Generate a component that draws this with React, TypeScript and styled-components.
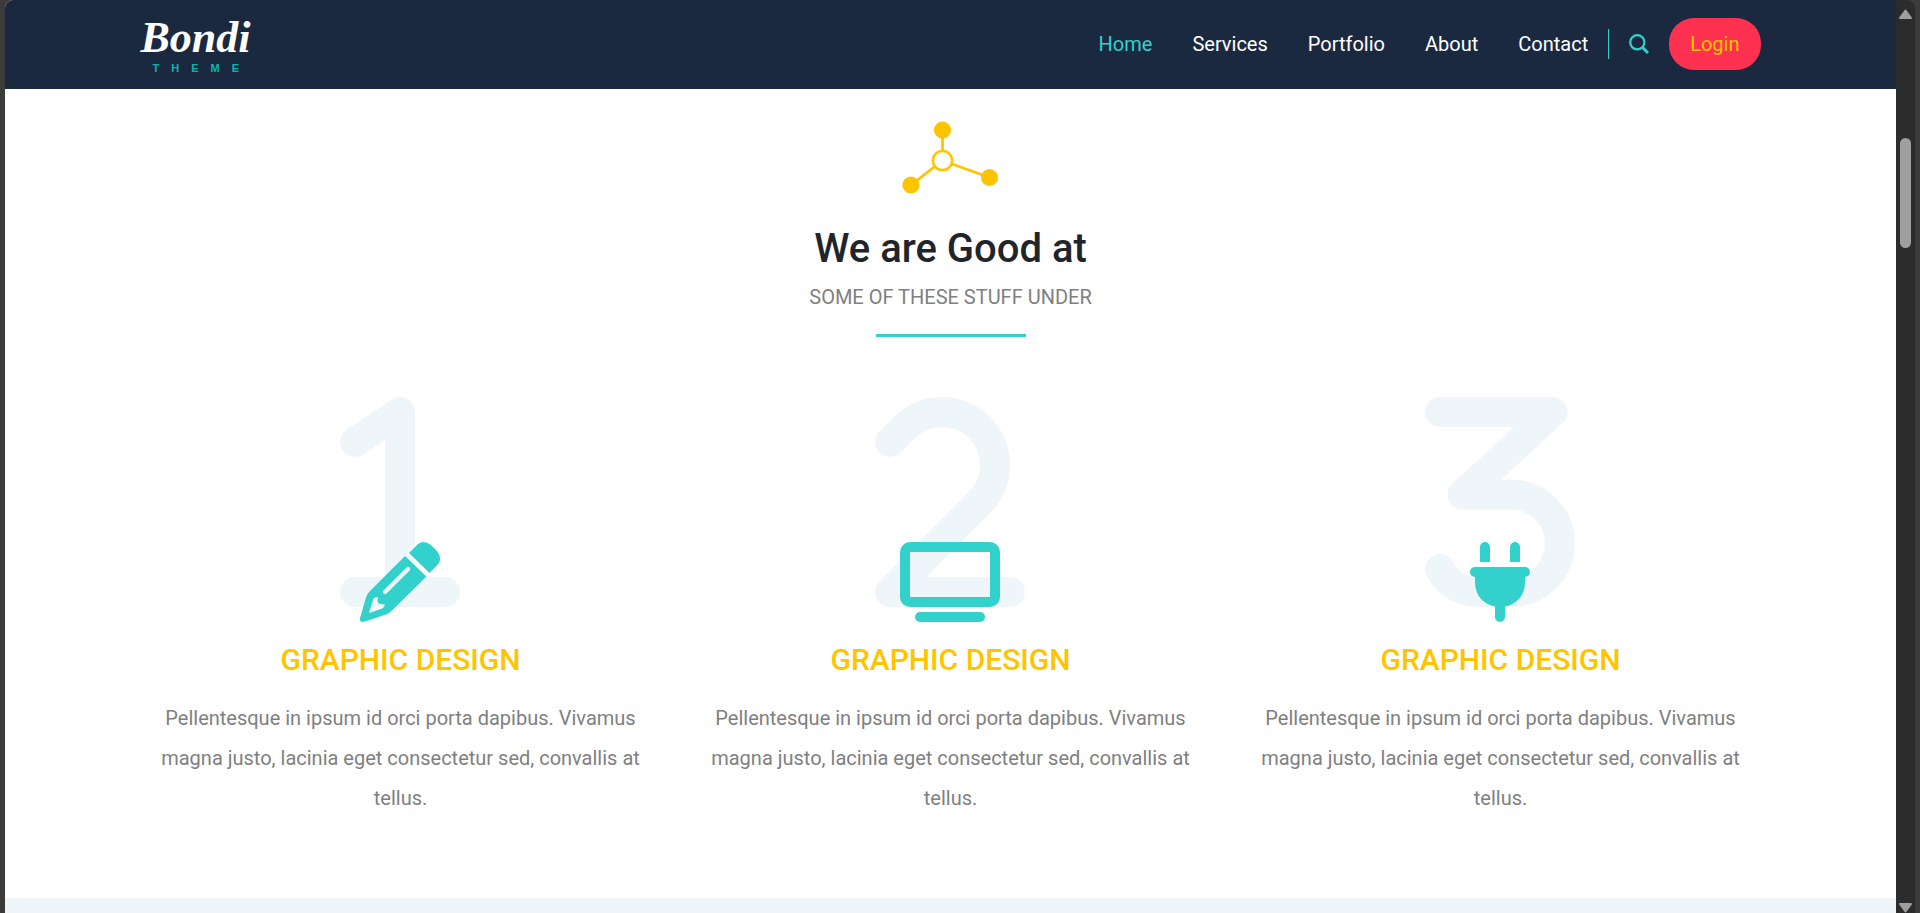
import React from 'react';
import styled, { createGlobalStyle } from 'styled-components';

const navy = '#1b2940';
const teal = '#33d1cc';
const yellow = '#ffc400';
const red = '#ff3150';
const pale = '#eff6fa';
const grey = '#808080';

const GlobalStyle = createGlobalStyle`
  *, *::before, *::after { box-sizing: border-box; }
  body {
    margin: 0;
    background: #3b3b3a;
    font-family: Roboto, 'Liberation Sans', sans-serif;
    font-size: 20px;
    line-height: 30px;
    color: #212529;
  }
  h2, h3, p, ul { margin: 0; padding: 0; }
`;

const Frame = styled.div`
  display: flex;
  height: 100vh;
  padding: 0 5px;
  overflow: hidden;
`;

const Page = styled.div`
  flex: 1;
  min-width: 0;
  display: flex;
  flex-direction: column;
  overflow: hidden;
  background: #fff;
  border-top-left-radius: 8px;
`;

const Header = styled.header`
  flex: none;
  padding-bottom: 1px;
  background: ${navy};
`;

const Container = styled.div`
  width: 100%;
  max-width: 1650px;
  margin: 0 auto;
  padding: 0 15px;
`;

const Bar = styled(Container)`
  display: flex;
  align-items: center;
  justify-content: space-between;
  height: 88px;
`;

const Brand = styled.a`
  display: flex;
  flex-direction: column;
  align-items: flex-start;
  color: #fff;
  text-decoration: none;
`;

const BrandName = styled.span`
  font: italic bold 44px/49px 'Liberation Serif', serif;
`;

const BrandTag = styled.span`
  padding-left: 12px;
  font: bold 11px/13px 'Liberation Sans', sans-serif;
  letter-spacing: 12px;
  color: #08b5b0;
`;

const Nav = styled.nav`
  display: flex;
  align-items: center;
  gap: 20px;
`;

const Menu = styled.ul`
  display: flex;
  gap: 40px;
  list-style: none;
`;

const MenuLink = styled.a<{ $active?: boolean }>`
  color: ${(p) => (p.$active ? teal : '#fff')};
  text-decoration: none;
`;

const Tools = styled.div`
  display: flex;
  align-items: center;
  gap: 20px;
`;

const SearchButton = styled.button`
  display: flex;
  padding: 0 0 0 20px;
  height: 30px;
  align-items: center;
  border: 0;
  border-left: 1px solid ${teal};
  background: none;
  color: ${teal};
`;

const LoginButton = styled.button`
  height: 52px;
  padding: 0 21px;
  border: 0;
  border-radius: 25px;
  background: ${red};
  color: ${yellow};
  font: inherit;
`;

const Section = styled.section`
  flex: none;
  padding: 32px 0 80px;
  text-align: center;
`;

const Emblem = styled.svg`
  display: block;
  margin: 0 auto 30px;
`;

const Title = styled.h2`
  font-size: 40px;
  line-height: 48px;
  font-weight: 500;
`;

const Subtitle = styled.p`
  margin-top: 9px;
  color: ${grey};
  text-transform: uppercase;
`;

const Rule = styled.div`
  width: 150px;
  height: 3px;
  margin: 22px auto 60px;
  background: ${teal};
`;

const Cards = styled.div`
  display: grid;
  grid-template-columns: repeat(3, 1fr);
  gap: 30px;
`;

const Card = styled.article`
  padding: 0 10px;
`;

const CardArt = styled.svg`
  display: block;
  margin: 0 auto 20px;
`;

const CardTitle = styled.h3`
  color: ${yellow};
  font-size: 30px;
  line-height: 36px;
  font-weight: 500;
  text-transform: uppercase;
`;

const CardText = styled.p`
  margin-top: 20px;
  color: ${grey};
  line-height: 40px;
`;

const NextSection = styled.section`
  flex: 1 0 15px;
  background: ${pale};
`;

const ScrollTrack = styled.div`
  flex: none;
  display: flex;
  flex-direction: column;
  align-items: center;
  width: 19px;
  padding-top: 9px;
  background: #2c2c2c;
  border-top-right-radius: 8px;
`;

const ScrollThumb = styled.div`
  width: 11px;
  height: 110px;
  margin: 119px 0 auto;
  border-radius: 6px;
  background: #9f9f9f;
`;

const Arrow = styled.svg`
  flex: none;
  display: block;
  fill: #9f9f9f;
  stroke: #9f9f9f;
  stroke-width: 2;
  stroke-linejoin: round;
`;

const digits: Record<number, string> = {
  1: 'M30 45L75 15V195M30 195H120',
  2: 'M15 45L29.5 30.5A53 53 0 1 1 104.5 105.5L15 195H135',
  3: 'M15 15H127.5L37.5 97.5H86.2A48.75 48.75 0 0 1 86.2 195H55C37 195 24 188 15 172',
};

const SearchIcon = () => (
  <svg width="20" height="20" viewBox="0 0 20 20" fill="none" stroke="currentColor" aria-hidden="true">
    <circle cx="8.300" cy="8.300" r="7.100" strokeWidth="2.300" />
    <path d="M13.300 13.300L19 19" strokeWidth="2.900" />
  </svg>
);

const Pencil = () => (
  <>
    <mask id="pencil-cuts">
      <rect width="150" height="225" fill="#fff" />
      <path d="M83 172L60 195" stroke="#000" strokeWidth="4.4" strokeLinecap="round" />
      <path d="M48.500 201.500Q50 200 53 200L52.500 204Q53 207 56 207L60 207.500Q59.500 210 57 211.500L44 216Z" fill="#000" />
    </mask>
    <path
      mask="url(#pencil-cuts)"
      d="M80 159L101.500 179.500L65 215.500Q62 217.500 58 218.500L40 224.500Q34 226 35 221L41 200.500Q42 197 45 194ZM84 156L92.500 147.500Q98.500 142.500 106 148L112 154Q118 162 112.500 168L104.500 176Z"
    />
  </>
);

const Monitor = () => (
  <>
    <path fillRule="evenodd" d="M35 145H115A10 10 0 0 1 125 155V200A10 10 0 0 1 115 210H35A10 10 0 0 1 25 200V155A10 10 0 0 1 35 145ZM35 155V200H115V155Z" />
    <rect x="40" y="215" width="70" height="10" rx="5" />
  </>
);

const Plug = () => (
  <>
    <path d="M55 165V150A5 5 0 0 1 65 150V165ZM85 165V150A5 5 0 0 1 95 150V165Z" />
    <rect x="45" y="170" width="60" height="10" rx="5" />
    <path d="M50 176H100V185C100 199 91 207.500 80 209.500V220A5 5 0 0 1 70 220V209.500C59 207.500 50 199 50 185Z" />
  </>
);

const services = [
  { digit: 1, Icon: Pencil },
  { digit: 2, Icon: Monitor },
  { digit: 3, Icon: Plug },
];

const links = ['Home', 'Services', 'Portfolio', 'About', 'Contact'];

export default function App() {
  return (
    <>
      <GlobalStyle />
      <Frame>
        <Page>
          <Header>
            <Bar>
              <Brand href="#">
                <BrandName>Bondi</BrandName>
                <BrandTag>THEME</BrandTag>
              </Brand>
              <Nav>
                <Menu>
                  {links.map((label, i) => (
                    <li key={label}>
                      <MenuLink href="#" $active={i === 0}>{label}</MenuLink>
                    </li>
                  ))}
                </Menu>
                <Tools>
                  <SearchButton aria-label="Search"><SearchIcon /></SearchButton>
                  <LoginButton>Login</LoginButton>
                </Tools>
              </Nav>
            </Bar>
          </Header>
          <Section>
            <Container>
              <Emblem width="97" height="74" viewBox="0 0 97 74" fill={yellow} aria-hidden="true">
                <path d="M40.500 9V39.500L9 64M40.500 39.500L87.500 56.500" fill="none" stroke={yellow} strokeWidth="2.800" />
                <circle cx="40.500" cy="9" r="8.600" />
                <circle cx="9" cy="64" r="8.600" />
                <circle cx="87.500" cy="56.500" r="8.600" />
                <circle cx="40.500" cy="39.500" r="9.600" fill="#fff" stroke={yellow} strokeWidth="2.500" />
              </Emblem>
              <Title>We are Good at</Title>
              <Subtitle>Some of these stuff under</Subtitle>
              <Rule />
              <Cards>
                {services.map(({ digit, Icon }) => (
                  <Card key={digit}>
                    <CardArt width="151" height="225" viewBox="0 0 151 225" fill={teal} aria-hidden="true">
                      <path d={digits[digit]} fill="none" stroke={pale} strokeWidth="30" strokeLinecap="round" strokeLinejoin="round" />
                      <Icon />
                    </CardArt>
                    <CardTitle>Graphic Design</CardTitle>
                    <CardText>
                      Pellentesque in ipsum id orci porta dapibus. Vivamus magna justo, lacinia eget consectetur sed, convallis at tellus.
                    </CardText>
                  </Card>
                ))}
              </Cards>
            </Container>
          </Section>
          <NextSection />
        </Page>
        <ScrollTrack aria-hidden="true">
          <Arrow width="13" height="10" viewBox="0 0 13 10"><path d="M6.500 1.500L12 9H1Z" /></Arrow>
          <ScrollThumb />
          <Arrow width="13" height="10" viewBox="0 0 13 10"><path d="M6.500 8.500L12 1H1Z" /></Arrow>
        </ScrollTrack>
      </Frame>
    </>
  );
}
